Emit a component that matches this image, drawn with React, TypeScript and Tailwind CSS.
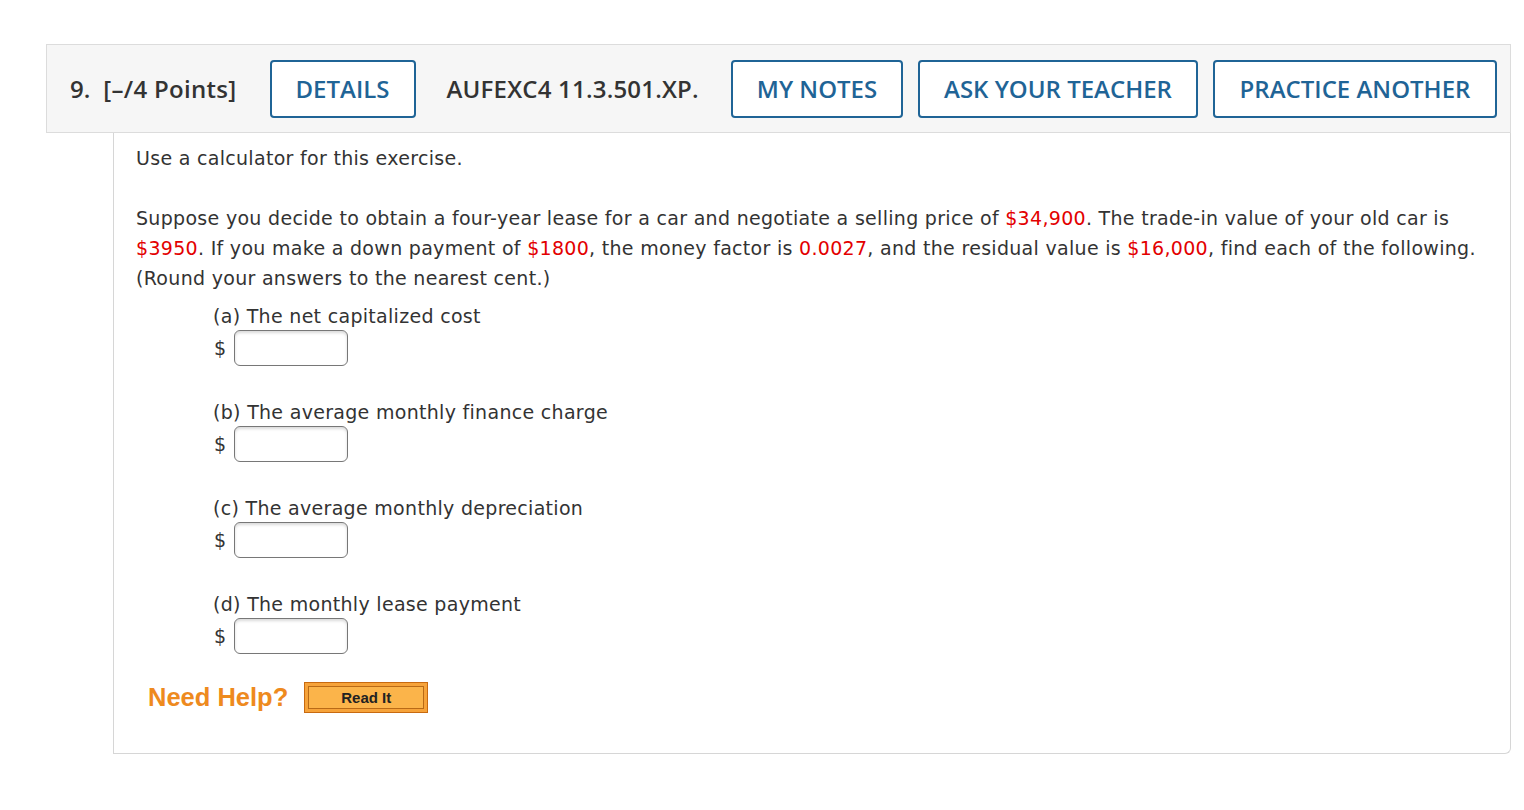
const red = "text-[#e30000]";

function Answer({ label }: { label: string }) {
  return (
    <div className="mb-[32px]">
      <div className="leading-[28px]">{label}</div>
      <div className="flex items-center gap-[8px] ml-[1px]">
        <span>$</span>
        <div className="w-[114px] h-[36px] rounded-[6px] border border-[#777] bg-white shadow-[inset_0_2px_3px_rgba(0,0,0,0.15)]" />
      </div>
    </div>
  );
}

function HeadButton({ children, w }: { children: string; w: string }) {
  return (
    <button className={`${w} h-[58px] rounded-[4px] border-2 border-[#1f6496] bg-white text-[#1f6496] text-[24px] font-semibold`}>
      {children}
    </button>
  );
}

export default function App() {
  return (
    <div className="bg-white min-h-[810px] pt-[44px] pl-[46px] pr-[13px] font-['DejaVu_Sans',Verdana,sans-serif]">
      <div className="h-[89px] flex items-center border border-[#dcdcdc] bg-[#f6f6f6] font-['Open_Sans',sans-serif] text-[#333]">
        <span className="ml-[23px] text-[24px] font-semibold">9.</span>
        <span className="ml-[13px] text-[24px] font-semibold tracking-[0.3px]">[–/4 Points]</span>
        <div className="ml-[33px]"><HeadButton w="w-[146px]">DETAILS</HeadButton></div>
        <span className="ml-[31px] text-[24px] font-semibold tracking-[0.2px]">AUFEXC4 11.3.501.XP.</span>
        <div className="ml-auto mr-[13px] flex gap-[15px]">
          <HeadButton w="w-[172px]">MY NOTES</HeadButton>
          <HeadButton w="w-[280px]">ASK YOUR TEACHER</HeadButton>
          <HeadButton w="w-[284px]">PRACTICE ANOTHER</HeadButton>
        </div>
      </div>
      <div className="ml-[67px] border border-t-0 border-[#d6d6d6] rounded-br-[6px] h-[621px] pl-[22px] pr-[20px] pt-[10px] text-[19px] tracking-[0.3px] text-[#333]">
        <p className="leading-[30px]">Use a calculator for this exercise.</p>
        <p className="leading-[30px] mt-[30px]">
          Suppose you decide to obtain a four-year lease for a car and negotiate a selling price of <span className={red}>$34,900</span>. The trade-in value of your old car is <span className={red}>$3950</span>. If you make a down payment of <span className={red}>$1800</span>, the money factor is <span className={red}>0.0027</span>, and the residual value is <span className={red}>$16,000</span>, find each of the following. (Round your answers to the nearest cent.)
        </p>
        <div className="ml-[77px] mt-[9px]">
          <Answer label="(a) The net capitalized cost" />
          <Answer label="(b) The average monthly finance charge" />
          <Answer label="(c) The average monthly depreciation" />
          <Answer label="(d) The monthly lease payment" />
        </div>
        <div className="flex items-center ml-[12px] mt-[-8px] font-['Liberation_Sans',Arial,sans-serif] tracking-normal">
          <span className="text-[25.5px] font-bold text-[#ee8a1e]">Need Help?</span>
          <button className="ml-[16px] w-[124px] h-[31px] border border-[#c86a10] bg-[#f6a33a] p-[3px]">
            <div className="h-full border border-[#b96a16] bg-[#fbb44a] text-[15px] font-bold text-[#222] leading-[21px]">Read It</div>
          </button>
        </div>
      </div>
    </div>
  );
}
